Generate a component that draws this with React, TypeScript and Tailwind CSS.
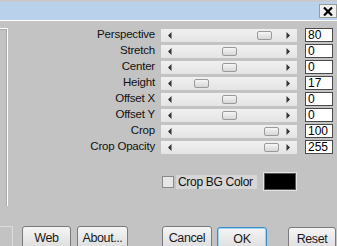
const rows = [
  { label: "Perspective", value: "80", pos: 96 },
  { label: "Stretch", value: "0", pos: 61 },
  { label: "Center", value: "0", pos: 61 },
  { label: "Height", value: "17", pos: 33 },
  { label: "Offset X", value: "0", pos: 61 },
  { label: "Offset Y", value: "0", pos: 61 },
  { label: "Crop", value: "100", pos: 103 },
  { label: "Crop Opacity", value: "255", pos: 103 },
];

const Track = ({ pos }: { pos: number }) => (
  <div className="relative h-[13px] w-[136px] bg-gradient-to-b from-[#f0f0f0] to-[#e4e4e4] flex items-center justify-between px-[7px]">
    <svg width="4" height="7" viewBox="0 0 4 7">
      <path d="M3.5 0 L0 3.5 L3.5 7Z" fill="#333" />
    </svg>
    <svg width="4" height="7" viewBox="0 0 4 7">
      <path d="M0.5 0 L4 3.5 L0.5 7Z" fill="#333" />
    </svg>
    <div
      className="absolute top-[2px] h-[9px] w-[15px] rounded-[2px] border border-[#9a9a9a] bg-gradient-to-b from-[#f6f6f6] to-[#d6d6d6]"
      style={{ left: pos }}
    />
  </div>
);

const Button = ({ children, w, focus }: { children: string; w: string; focus?: boolean }) => (
  <button
    className={`${w} h-[23px] rounded-[3px] border pt-[2px] text-[12.5px] tracking-[-0.4px] text-[#1a1a1a] bg-gradient-to-b from-[#f5f5f5] to-[#dddddd] ${
      focus ? "border-[#3a8cc8] shadow-[inset_0_0_0_1px_#9fd3f2]" : "border-[#7a7a7a]"
    }`}
  >
    {children}
  </button>
);

export default function App() {
  return (
    <div className="w-[337px] h-[246px] overflow-hidden bg-[#c3c3c3] font-['Liberation_Sans',Arial,sans-serif] text-black">
      <div className="h-[21px] border-t-2 border-[#c6c8cb] bg-[#b9d1ea] border-b border-b-white flex justify-end items-start pt-[2px]">
        <div className="w-[18px] h-[14px] bg-[#f0f0f0] border border-[#9a9a9a] flex items-center justify-center">
          <svg width="10" height="9" viewBox="0 0 10 9">
            <path d="M1 0.5 L9 8.5 M9 0.5 L1 8.5" stroke="#000" strokeWidth="2.2" />
          </svg>
        </div>
      </div>

      <div className="flex h-[205px]">
        <div className="w-[8px] pt-[7px]">
          <div className="h-[178px] border-t border-r border-white shadow-[inset_-1px_1px_0_#a8a8a8]" />
        </div>

        <div className="flex flex-col pt-[6px]">
          {rows.map((r) => (
            <div key={r.label} className="flex items-center h-[16px]">
              <div className="w-[147px] text-right text-[11.5px] leading-none tracking-[-0.2px] text-[#111]">{r.label}</div>
              <div className="ml-[6px]">
                <Track pos={r.pos} />
              </div>
              <div className="ml-[8px] w-[28px] h-[14px] bg-white border border-[#4a4a4a] text-[12px] leading-[12px] pl-[2px]">
                {r.value}
              </div>
            </div>
          ))}

          <div className="flex items-center h-[19px] mt-[17px] ml-[154px]">
            <div className="w-[12px] h-[12px] border border-[#8a8a8a] bg-[#e6e6e6]" />
            <div className="ml-[2px] w-[81px] h-[14px] bg-[#d6d6d6] whitespace-nowrap text-[12px] leading-[14px] tracking-[-0.3px] pl-[2px] text-[#111]">
              Crop BG Color
            </div>
            <div className="ml-[6px] w-[34px] h-[19px] bg-black border border-[#e4e4e4] shadow-[inset_0_0_0_1px_#555]" />
          </div>
        </div>
      </div>

      <div className="flex items-start">
        <div className="w-[13px] h-[20px] border-t border-r border-[#dcdcdc]" />
        <div className="ml-[9px] flex gap-[6px]">
          <Button w="w-[49px]">Web</Button>
          <Button w="w-[51px]">About...</Button>
        </div>
        <div className="ml-[34px] flex">
          <Button w="w-[50px]">Cancel</Button>
          <div className="ml-[5px]">
            <Button w="w-[50px]" focus>
              OK
            </Button>
          </div>
          <div className="ml-[21px]">
            <Button w="w-[48px]">Reset</Button>
          </div>
        </div>
      </div>
    </div>
  );
}
